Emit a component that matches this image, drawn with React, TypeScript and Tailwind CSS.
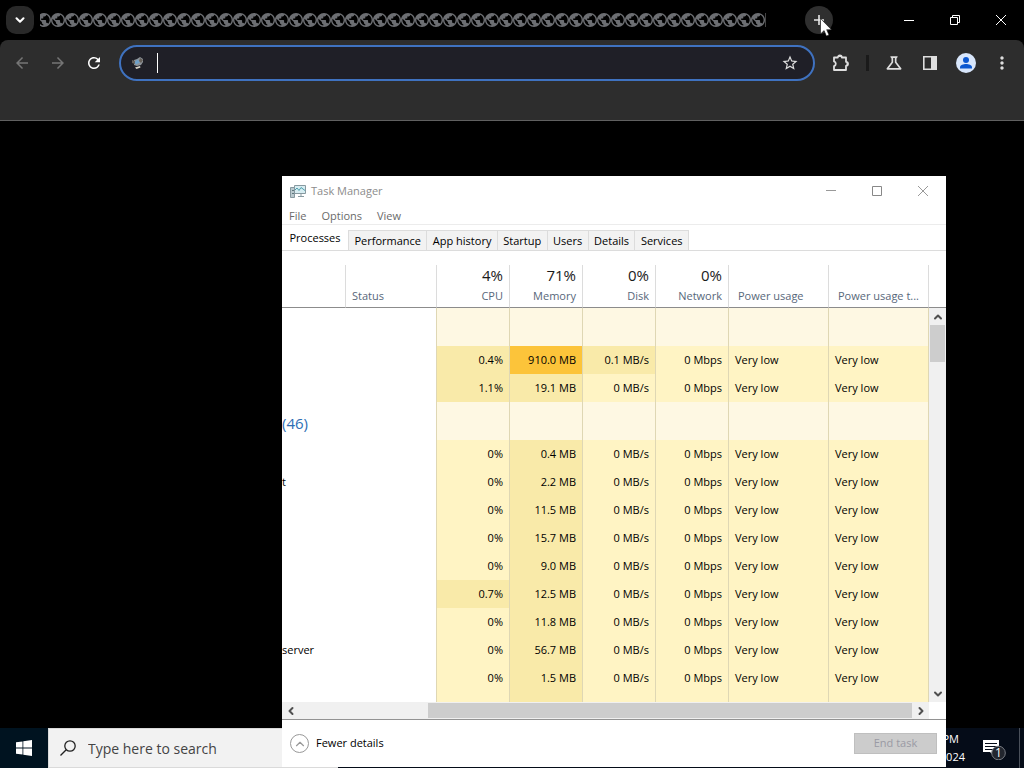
import React from 'react';
import { ChevronDown, ChevronLeft, ChevronRight, ChevronUp } from 'lucide-react';
import {
  MdArrowBack,
  MdArrowForward,
  MdMoreVert,
  MdOutlineScience,
  MdPublic,
  MdRefresh,
  MdStarBorder,
} from 'react-icons/md';

const tabCount = 52;

const menus = ['File', 'Options', 'View'];
const tabs = ['Performance', 'App history', 'Startup', 'Users', 'Details', 'Services'];

const columns = [
  { total: '', label: '', align: 'text-left', width: 'w-[64px]' },
  { total: '', label: 'Status', align: 'text-left', width: 'w-[91px]' },
  { total: '4%', label: 'CPU', align: 'text-right', width: 'w-[73px]' },
  { total: '71%', label: 'Memory', align: 'text-right', width: 'w-[73px]' },
  { total: '0%', label: 'Disk', align: 'text-right', width: 'w-[73px]' },
  { total: '0%', label: 'Network', align: 'text-right', width: 'w-[73px]' },
  { total: '', label: 'Power usage', align: 'text-left', width: 'w-[100px]' },
  { total: '', label: 'Power usage t...', align: 'text-left', width: 'w-[100px]' },
];

type Row = { name: string; group?: boolean; cpu?: string; memory?: string; disk?: string };

const rows: Row[] = [
  { name: '', group: true },
  { name: '', cpu: '0.4%', memory: '910.0 MB', disk: '0.1 MB/s' },
  { name: '', cpu: '1.1%', memory: '19.1 MB', disk: '0 MB/s' },
  { name: '(46)', group: true },
  { name: '', cpu: '0%', memory: '0.4 MB', disk: '0 MB/s' },
  { name: 't', cpu: '0%', memory: '2.2 MB', disk: '0 MB/s' },
  { name: '', cpu: '0%', memory: '11.5 MB', disk: '0 MB/s' },
  { name: '', cpu: '0%', memory: '15.7 MB', disk: '0 MB/s' },
  { name: '', cpu: '0%', memory: '9.0 MB', disk: '0 MB/s' },
  { name: '', cpu: '0.7%', memory: '12.5 MB', disk: '0 MB/s' },
  { name: '', cpu: '0%', memory: '11.8 MB', disk: '0 MB/s' },
  { name: 'server', cpu: '0%', memory: '56.7 MB', disk: '0 MB/s' },
  { name: '', cpu: '0%', memory: '1.5 MB', disk: '0 MB/s' },
  { name: '', cpu: '', memory: '', disk: '' },
];

function heat(value: string) {
  if (value === '910.0 MB') return 'bg-[#fcc43a]';
  if (value.startsWith('0 ') || value === '0%') return 'bg-[#fff4c4]';
  return 'bg-[#f9eaa9]';
}

function TitleBar() {
  return (
    <header className="flex h-10 items-center bg-black pl-1.5 text-white">
      <button aria-label="Search tabs" className="flex h-7 w-7 shrink-0 items-center justify-center rounded-[10px] bg-[#292929]">
        <ChevronDown className="h-3.5 w-3.5" strokeWidth={3.5} />
      </button>
      <div className="ml-1.5 flex min-w-0 flex-1 justify-end overflow-hidden border-r border-[#444] text-[#6c6e72]">
        {Array.from({ length: tabCount }, (_, i) => (
          <MdPublic key={i} viewBox="2 2 20 20" className="h-3.5 w-3.5 shrink-0" />
        ))}
      </div>
      <div className="relative ml-[39px] mr-[53px] h-7 w-7 shrink-0">
        <button aria-label="New tab" className="flex h-7 w-7 items-center justify-center rounded-full bg-[#2f2f2f]">
          <svg viewBox="0 0 12 12" className="h-3 w-3" stroke="#e8e8e8" strokeWidth="1.6">
            <path d="M6 1v10M1 6h10" />
          </svg>
        </button>
        <svg viewBox="0 0 12 19" className="absolute left-[15px] top-3 h-[19px] w-3">
          <path d="M.5.500v15.500l3.600-3.400 2.300 5.500 2.600-1.100-2.300-5.300h4.800z" fill="#fff" stroke="#111" strokeWidth=".6" />
        </svg>
      </div>
      <button aria-label="Minimize" className="flex h-10 w-[46px] shrink-0 items-center justify-center">
        <svg viewBox="0 0 10 10" className="h-2.5 w-2.5" stroke="#fff">
          <path d="M0 5.500h10" />
        </svg>
      </button>
      <button aria-label="Restore" className="flex h-10 w-[46px] shrink-0 items-center justify-center">
        <svg viewBox="0 0 10 10" className="h-2.5 w-2.5" stroke="#fff" fill="none">
          <path d="M.5 2.500h7v7h-7zM2.500 2.500v-2h7v7h-2" />
        </svg>
      </button>
      <button aria-label="Close" className="flex h-10 w-[46px] shrink-0 items-center justify-center">
        <svg viewBox="0 0 10 10" className="h-2.5 w-2.5" stroke="#fff">
          <path d="M0 0l10 10M10 0L0 10" />
        </svg>
      </button>
    </header>
  );
}

function Toolbar() {
  const button = 'flex h-9 w-9 shrink-0 items-center justify-center';
  return (
    <div className="bg-black">
      <nav className="h-[81px] rounded-t-lg border-b border-[#606060] bg-[#2d2d2d] px-1 pt-[5px]">
        <div className="flex items-center text-[#dedede]">
          <button aria-label="Back" className={`${button} text-[#757575]`}>
            <MdArrowBack className="h-[18px] w-[18px]" />
          </button>
          <button aria-label="Forward" className={`${button} text-[#757575]`}>
            <MdArrowForward className="h-[18px] w-[18px]" />
          </button>
          <button aria-label="Reload" className={`${button} text-white`}>
            <MdRefresh className="h-[18px] w-[18px]" />
          </button>
          <div className="ml-[7px] mr-2 flex h-9 min-w-0 flex-1 items-center rounded-full border-2 border-[#3f72c0] bg-[#1f1f27] pl-[9px]">
            <svg viewBox="0 0 16 16" className="h-4 w-4 shrink-0">
              <path d="M4 5l3-1 3-2 3 2v3l-2 3-4 1-3-1z" fill="#8d9399" />
              <path d="M4 7l2 2.500 4-2-2-3z" fill="#6ea0c8" />
              <path d="M2 5l3 1v3L2 8zM10 3l3 2-2 3-2-2z" fill="#66605a" />
              <path d="M5 12.500l5-1.500.5 1.500-4 1.500z" fill="#d8d4c8" />
            </svg>
            <span className="ml-[11px] h-5 w-px bg-white" />
            <input aria-label="Address" className="h-full min-w-0 flex-1 bg-transparent px-1 text-sm text-white outline-none" />
            <button aria-label="Bookmark" className="mr-[7px] flex h-8 w-8 items-center justify-center">
              <MdStarBorder className="h-[18px] w-[18px]" />
            </button>
          </div>
          <button aria-label="Extensions" className={button}>
            <svg viewBox="0 0 20 20" className="h-5 w-5" fill="none" stroke="currentColor" strokeWidth="1.800" strokeLinejoin="round">
              <path d="M3 4.500h3.800a2 2 0 0 1 4 0H15v4.300a2 2 0 0 1 0 4V17H3v-3.800a2.500 2.500 0 0 0 0-4.800z" />
              <path d="M7 4a1.900 1.900 0 0 1 3.800 0zM15.500 9a1.900 1.900 0 0 1 0 3.600z" fill="currentColor" stroke="none" />
            </svg>
          </button>
          <span className="mx-[7px] h-4 w-[3px] bg-[#1a1a1a]" />
          <button aria-label="Labs" className={button}>
            <MdOutlineScience className="h-5 w-5" />
          </button>
          <button aria-label="Side panel" className={button}>
            <svg viewBox="0 0 14 14" className="h-3.5 w-3.5">
              <path d="M.8.800h12.400v12.400H.8z" fill="none" stroke="currentColor" strokeWidth="1.600" />
              <path d="M8 1h5v12H8z" fill="currentColor" />
            </svg>
          </button>
          <button aria-label="Profile" className={button}>
            <svg viewBox="0 0 20 20" className="h-5 w-5">
              <circle cx="10" cy="10" r="10" fill="#d8e6fb" />
              <circle cx="10" cy="7" r="3" fill="#0b57d0" />
              <path d="M4 15.500v-1.300c0-2.200 3.500-3.200 6-3.200s6 1 6 3.200v1.300z" fill="#0b57d0" />
            </svg>
          </button>
          <button aria-label="Menu" className={button}>
            <MdMoreVert className="h-5 w-5" />
          </button>
        </div>
      </nav>
    </div>
  );
}

function ProcessTable() {
  return (
    <table className="w-[647px] table-fixed border-separate border-spacing-0">
      <thead>
        <tr>
          {columns.map((column, i) => (
            <th
              key={i}
              className={`${column.width} ${column.align} ${i > 5 ? 'pl-[9px]' : 'px-1.5'} h-[43px] whitespace-nowrap border-b border-r border-b-[#8c8c8c] border-r-[#dcdcdc] pb-[3px] pt-0 align-bottom font-normal text-[#58677a]`}
            >
              <div className="h-[23px] text-[15px] leading-5 text-[#1a1a1a]">{column.total}</div>
              <div className="leading-4">{column.label}</div>
            </th>
          ))}
        </tr>
      </thead>
      <tbody>
        {rows.map((row, i) => {
          const edge = 'border-r border-[#dfd7b4] px-1.5';
          if (row.group) {
            return (
              <tr key={i} className="h-[38px]">
                <td className="p-0 pt-1 text-[15px] text-[#2e6eb5]">{row.name}</td>
                <td className="border-r border-[#dfd7b4]" />
                {columns.slice(2).map((_, j) => (
                  <td key={j} className={`${edge} bg-[#fef8e3]`} />
                ))}
              </tr>
            );
          }
          const filled = row.cpu !== '';
          return (
            <tr key={i} className="h-7 whitespace-nowrap">
              <td className="p-0">{row.name}</td>
              <td className="border-r border-[#dfd7b4]" />
              <td className={`${edge} ${filled ? heat(row.cpu!) : 'bg-[#fff4c4]'} text-right`}>{row.cpu}</td>
              <td className={`${edge} ${heat(row.memory!)} text-right`}>{row.memory}</td>
              <td className={`${edge} ${filled ? heat(row.disk!) : 'bg-[#fff4c4]'} text-right`}>{row.disk}</td>
              <td className={`${edge} bg-[#fff4c4] text-right`}>{filled && '0 Mbps'}</td>
              <td className={`${edge} bg-[#fff4c4]`}>{filled && 'Very low'}</td>
              <td className={`${edge} bg-[#fff4c4]`}>{filled && 'Very low'}</td>
            </tr>
          );
        })}
      </tbody>
    </table>
  );
}

function TaskManager() {
  return (
    <section className="absolute left-[282px] top-[176px] flex h-[591px] w-[664px] flex-col bg-white text-[11px] text-black">
      <div className="flex h-[30px] shrink-0 items-center pl-2 text-[#8c8c8c]">
        <svg viewBox="0 0 16 14" className="mr-[5px] h-3.5 w-4" fill="none">
          <path d="M4.500 1.500h11v8h-11z" fill="#d7edf2" stroke="#8799a0" />
          <path d="M5 6l2-2 2 2.500 2-3L15 6.500" stroke="#4d9eac" />
          <path d="M8 12.500h6M11 10v2" stroke="#8799a0" />
          <path d="M.5 3.500h4v10h-4z" fill="#bac9ce" stroke="#8799a0" />
          <path d="M2 6.500h2M2 9.500h2" stroke="#5e777d" />
        </svg>
        <h1 className="flex-1">Task Manager</h1>
        <button aria-label="Minimize" className="flex h-7 w-[46px] items-center justify-center">
          <svg viewBox="0 0 10 10" className="h-2.5 w-2.5" stroke="#999"><path d="M0 4.500h10" /></svg>
        </button>
        <button aria-label="Maximize" className="flex h-7 w-[46px] items-center justify-center">
          <svg viewBox="0 0 10 10" className="h-2.5 w-2.5" stroke="#888" fill="none"><path d="M.5.500h9v9h-9z" /></svg>
        </button>
        <button aria-label="Close" className="flex h-7 w-[46px] items-center justify-center">
          <svg viewBox="0 0 10 10" className="h-2.5 w-2.5" stroke="#999"><path d="M0 0l10 10M10 0L0 10" /></svg>
        </button>
      </div>
      <div className="flex h-[19px] shrink-0 items-center gap-[15px] border-b border-[#ececec] pl-[7px] pt-0.5 text-[#6a6a6a]">
        {menus.map((menu) => (
          <button key={menu}>{menu}</button>
        ))}
      </div>
      <div className="flex h-[26px] shrink-0 items-end border-b border-[#dcdcdc]">
        <button className="h-[22px] w-[66px] pb-0.5">Processes</button>
        <div className="flex w-[341px]">
          {tabs.map((tab) => (
            <button key={tab} className="h-5 flex-auto border-l border-t border-[#dcdcdc] bg-[#f2f2f2] pt-px last:border-r">
              {tab}
            </button>
          ))}
        </div>
      </div>
      <div className="flex min-h-0 flex-1 pt-3.5">
        <div className="flex-1 overflow-hidden">
          <ProcessTable />
        </div>
        <div className="flex w-[17px] shrink-0 flex-col pt-[42px]">
          <div className="flex flex-1 flex-col items-center border-t border-[#8c8c8c] bg-[#f0f0f0] text-[#505050]">
            <div className="flex h-[17px] shrink-0 items-center">
              <ChevronUp className="h-3 w-3" strokeWidth={4} />
            </div>
            <div className="h-[37px] w-[15px] bg-[#cdcdcd]" />
            <ChevronDown className="mb-0.5 mt-auto h-3 w-3" strokeWidth={4} />
          </div>
        </div>
      </div>
      <div className="flex h-[18px] shrink-0 items-center border-b border-[#929292] pr-[17px] text-[#505050]">
        <div className="flex h-full flex-1 items-center bg-[#f0f0f0]">
          <span className="flex w-[17px] justify-center"><ChevronLeft className="h-3 w-3" strokeWidth={4} /></span>
          <div className="ml-auto h-[15px] w-[484px] bg-[#cdcdcd]" />
          <span className="flex w-[17px] justify-center"><ChevronRight className="h-3 w-3" strokeWidth={4} /></span>
        </div>
      </div>
      <div className="flex h-[47px] shrink-0 items-center justify-between pl-2 pr-[9px]">
        <button className="flex items-center gap-[7px]">
          <span className="flex h-[19px] w-[19px] items-center justify-center rounded-full border border-[#999]">
            <ChevronUp className="h-3.5 w-3.5 text-[#999]" strokeWidth={2} />
          </span>
          Fewer details
        </button>
        <button disabled className="h-[21px] w-[83px] border border-[#bfbfbf] bg-[#cccccc] text-[#9a9aa4]">
          End task
        </button>
      </div>
    </section>
  );
}

function Taskbar() {
  return (
    <footer className="flex h-10 shrink-0 items-stretch bg-[#050c18] text-white">
      <button aria-label="Start" className="flex w-12 items-center justify-center bg-[#001320]">
        <svg viewBox="0 0 16 16" className="h-4 w-4" fill="#fff">
          <path d="M0 2.300l6.500-.9v6.200H0zM7.300 1.300L16 0v7.600H7.300zM0 8.400h6.500v6.200L0 13.700zM7.300 8.400H16V16l-8.700-1.300z" />
        </svg>
      </button>
      <label className="flex w-[290px] items-center gap-3 border border-[#dadada] bg-[#f2f2f2] pl-[11px]">
        <svg viewBox="0 0 16 16" className="h-4 w-4" fill="none" stroke="#222" strokeWidth="1.300">
          <circle cx="10" cy="6" r="5.200" />
          <path d="M6.200 9.800L.5 15.500" />
        </svg>
        <input aria-label="Search" placeholder="Type here to search" className="min-w-0 flex-1 bg-transparent pt-0.5 text-sm outline-none placeholder:text-[#444]" />
      </label>
      <div className="ml-auto w-20 pt-0.5 text-right text-[11px] leading-[18px]">
        <div className="pr-1.5">PM</div>
        <div>2024</div>
      </div>
      <button aria-label="Notifications" className="ml-3.5 mr-3 flex w-7 items-center justify-center">
        <svg viewBox="0 0 26 24" className="h-6 w-[26px]">
          <path d="M3 4h16v12h-5v4l-4-4H3z" fill="#fff" />
          <path d="M5 7.500h12M5 10.500h12M5 13.500h8" stroke="#050c18" />
          <circle cx="18.500" cy="17" r="6.800" fill="#22262e" stroke="#777b82" />
          <text x="18.500" y="21" textAnchor="middle" fontSize="12" fill="#fff">1</text>
        </svg>
      </button>
      <span className="mr-1 w-px bg-[#4a505a]" />
    </footer>
  );
}

export default function App() {
  return (
    <div className="relative flex h-screen flex-col overflow-hidden bg-black font-['Open_Sans','Noto_Sans',sans-serif]">
      <TitleBar />
      <Toolbar />
      <main className="flex-1" />
      <Taskbar />
      <TaskManager />
    </div>
  );
}
